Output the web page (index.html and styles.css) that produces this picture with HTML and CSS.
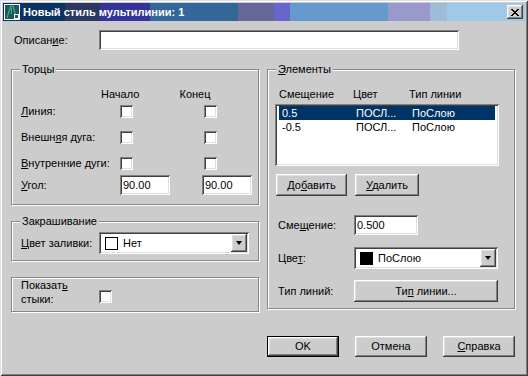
FILE: index.html
```html
<!DOCTYPE html>
<html lang="ru">
<head>
  <meta charset="UTF-8">
  <title>Новый стиль мультилинии</title>
  <link rel="stylesheet" href="styles.css">
</head>
<body>

<div class="window">
  <!-- Заголовок окна -->
  <div class="titlebar">
    <svg class="app-icon" width="16" height="16" viewBox="0 0 16 16">
      <rect x="0.5" y="0.5" width="15" height="15" fill="#1d5663" stroke="#fff"/>
      <path d="M3 14 L6.5 2.5 L9 2.5 L12 12" fill="none" stroke="#3fb07a" stroke-width="1.2"/>
      <path d="M7.5 4 L7.5 10" stroke="#3fb07a" stroke-width="1"/>
      <rect x="10.5" y="10.5" width="4" height="4" fill="#1d5663" stroke="#fff"/>
    </svg>
    <span class="title">Новый стиль мультилинии: 1</span>
    <span class="close-btn">
      <svg width="8" height="7" viewBox="0 0 8 7"><path d="M0 0h2v1h-2zM6 0h2v1h-2zM1 1h2v1h-2zM5 1h2v1h-2zM2 2h4v1h-4zM3 3h2v1h-2zM2 4h4v1h-4zM1 5h2v1h-2zM5 5h2v1h-2zM0 6h2v1h-2zM6 6h2v1h-2z" fill="#000"/></svg>
    </span>
  </div>

  <div class="desc-row">
    <span class="desc-label">Описан<u>и</u>е:</span>
    <div class="field desc-field"></div>
  </div>

  <div class="columns">
    <div class="col-left">
      <div class="group caps">
        <span class="legend">Торцы</span>
        <div class="caps-head"><span>Начало</span><span>Конец</span></div>
        <div class="caps-row first">
          <span class="caps-label"><u>Л</u>иния:</span>
          <span class="cell"><span class="check"></span></span>
          <span class="cell2"><span class="check"></span></span>
        </div>
        <div class="caps-row">
          <span class="caps-label">Внешн<u>я</u>я дуга:</span>
          <span class="cell"><span class="check"></span></span>
          <span class="cell2"><span class="check"></span></span>
        </div>
        <div class="caps-row">
          <span class="caps-label"><u>В</u>нутренние дуги:</span>
          <span class="cell"><span class="check"></span></span>
          <span class="cell2"><span class="check"></span></span>
        </div>
        <div class="caps-row angle">
          <span class="caps-label"><u>У</u>гол:</span>
          <span class="cell"><span class="field angle-field">90.00</span></span>
          <span class="field angle-field">90.00</span>
        </div>
      </div>

      <div class="group fill">
        <span class="legend">Закрашивание</span>
        <div class="fill-row">
          <span class="fill-label"><u>Ц</u>вет заливки:</span>
          <div class="field combo fill-combo">
            <span class="swatch"></span>
            <span class="combo-text">Нет</span>
            <span class="combo-btn"><span class="arrow"></span></span>
          </div>
        </div>
      </div>

      <div class="group joints">
        <span class="joints-label">Показат<u>ь</u><br>стыки:</span>
        <span class="check joints-check"></span>
      </div>
    </div>

    <div class="col-right">
      <div class="group elements">
        <span class="legend"><u>Э</u>лементы</span>
        <div class="el-head"><span>Смещение</span><span>Цвет</span><span>Тип линии</span></div>
        <div class="field list">
          <div class="list-row selected"><span>0.5</span><span>ПОСЛ...</span><span>ПоСлою</span></div>
          <div class="list-row"><span>-0.5</span><span>ПОСЛ...</span><span>ПоСлою</span></div>
        </div>
        <div class="el-buttons">
          <span class="btn btn-add"><span>До<u>б</u>авить</span></span>
          <span class="btn btn-del"><span><u>У</u>далить</span></span>
        </div>
        <div class="el-row offset-row">
          <span class="el-label">Сме<u>щ</u>ение:</span>
          <span class="field offset-field">0.500</span>
        </div>
        <div class="el-row color-row">
          <span class="el-label">Цве<u>т</u>:</span>
          <div class="field combo color-combo">
            <span class="swatch black"></span>
            <span class="combo-text">ПоСлою</span>
            <span class="combo-btn"><span class="arrow"></span></span>
          </div>
        </div>
        <div class="el-row ltype-row">
          <span class="el-label">Тип линий:</span>
          <span class="btn btn-ltype"><span>Ти<u>п</u> линии...</span></span>
        </div>
      </div>
    </div>
  </div>

  <div class="footer">
    <span class="btn btn-ok"><span>OK</span></span>
    <span class="btn"><span>Отмена</span></span>
    <span class="btn"><span><u>С</u>правка</span></span>
  </div>
</div>

</body>
</html>
```

FILE: styles.css
```css
body {
  margin: 0;
  font-family: "Liberation Sans", Arial, sans-serif;
  font-size: 11px;
  line-height: 13px;
  color: #000;
}

u {
  text-decoration: underline;
  text-underline-offset: 1px;
}

.window {
  width: 528px;
  height: 376px;
  box-sizing: border-box;
  background: #cccccc;
  box-shadow: inset 1px 1px #dfdfdf, inset -1px -1px #404040, inset 2px 2px #fff, inset -2px -2px #808080;
  display: flex;
  flex-direction: column;
}

/* Заголовок */
.titlebar {
  margin: 3px 3px 0;
  height: 18px;
  display: flex;
  align-items: center;
  background: linear-gradient(to right,
    #0b3262 0 62px,
    #2a3860 62px 97px,
    #333399 97px 147px,
    #336699 147px 235px,
    #666699 235px 271px,
    #6666cc 271px 287px,
    #6699cc 287px 385px,
    #9999cc 385px 427px,
    #9cbcd8 427px 444px,
    #a0c9e8 444px);
}

.app-icon {
  margin-left: 1px;
  flex-shrink: 0;
}

.title {
  margin-left: 3px;
  color: #fff;
  font-weight: bold;
  font-size: 11px;
}

.close-btn {
  margin-left: auto;
  margin-right: 2px;
  width: 16px;
  height: 14px;
  box-sizing: border-box;
  background: #cccccc;
  box-shadow: inset -1px -1px #404040, inset 1px 1px #fff, inset -2px -2px #808080, inset 2px 2px #dfdfdf;
  display: flex;
  align-items: center;
  justify-content: center;
}

/* Общие элементы */
.field {
  box-sizing: border-box;
  background: #fff;
  box-shadow: inset 1px 1px #808080, inset -1px -1px #fff, inset 2px 2px #404040, inset -2px -2px #dfdfdf;
}

.check {
  display: block;
  width: 13px;
  height: 13px;
  box-sizing: border-box;
  background: #fff;
  box-shadow: inset 1px 1px #808080, inset -1px -1px #fff, inset 2px 2px #404040, inset -2px -2px #dfdfdf;
}

.btn {
  box-sizing: border-box;
  height: 22px;
  background: #cccccc;
  box-shadow: inset -1px -1px #404040, inset 1px 1px #fff, inset -2px -2px #808080, inset 2px 2px #dfdfdf;
  display: flex;
  align-items: center;
  justify-content: center;
}

.group {
  position: relative;
  box-sizing: border-box;
  border: 1px solid #888;
  box-shadow: inset 1px 1px #fff, 1px 1px #fff;
}

.legend {
  position: absolute;
  top: -7px;
  left: 8px;
  padding: 0 2px;
  background: #cccccc;
}

/* Описание */
.desc-row {
  margin-top: 9px;
  padding-left: 14px;
  height: 20px;
  display: flex;
  align-items: center;
}

.desc-label {
  width: 85px;
}

.desc-field {
  width: 360px;
  height: 20px;
}

.columns {
  margin-top: 19px;
  padding-left: 11px;
  display: flex;
  gap: 8px;
}

.col-left {
  width: 248px;
  display: flex;
  flex-direction: column;
}

.col-right {
  width: 248px;
}

/* Торцы */
.caps {
  padding: 17px 0 9px 9px;
}

.caps-head {
  height: 14px;
  padding-left: 80px;
  display: flex;
  align-items: center;
}

.caps-head span {
  width: 80px;
}

.caps-row {
  margin-top: 13px;
  height: 13px;
  display: flex;
  align-items: center;
}

.caps-row.first {
  margin-top: 4px;
}

.caps-row.angle {
  margin-top: 5px;
  height: 20px;
}

.caps-label {
  width: 99px;
}

.cell {
  width: 82px;
}

.cell2 {
  padding-left: 2px;
}

.angle-field {
  display: flex;
  align-items: center;
  width: 50px;
  height: 20px;
  padding-left: 3px;
}

/* Закрашивание */
.fill {
  margin-top: 16px;
  padding: 10px 0 6px 9px;
}

.fill-row {
  display: flex;
  align-items: center;
}

.fill-label {
  width: 78px;
}

.combo {
  display: flex;
  align-items: center;
  height: 22px;
  padding: 2px;
}

.fill-combo {
  width: 150px;
}

.swatch {
  width: 13px;
  height: 13px;
  box-sizing: border-box;
  border: 1px solid #000;
  background: #fff;
  margin-left: 4px;
}

.swatch.black {
  background: #000;
}

.combo-text {
  margin-left: 5px;
}

.combo-btn {
  margin-left: auto;
  width: 16px;
  height: 18px;
  box-sizing: border-box;
  background: #cccccc;
  box-shadow: inset -1px -1px #404040, inset 1px 1px #fff, inset -2px -2px #808080, inset 2px 2px #dfdfdf;
  display: flex;
  align-items: center;
  justify-content: center;
}

.arrow {
  width: 0;
  height: 0;
  border-left: 3.5px solid transparent;
  border-right: 3.5px solid transparent;
  border-top: 4px solid #000;
}

/* Показать стыки */
.joints {
  margin-top: 16px;
  padding: 0 0 5px 9px;
  display: flex;
  line-height: 14px;
}

.joints-label {
  width: 78px;
}

.joints-check {
  margin-top: 12px;
}

/* Элементы */
.elements {
  padding: 17px 0 6px 0;
}

.el-head {
  height: 14px;
  padding-left: 11px;
  display: grid;
  grid-template-columns: 74px 56px auto;
  align-items: center;
}

.list {
  margin: 3px 0 0 7px;
  width: 224px;
  height: 62px;
  padding: 2px 4px;
}

.list-row {
  height: 14px;
  padding-left: 3px;
  display: grid;
  grid-template-columns: 74px 56px auto;
  align-items: center;
}

.list-row.selected {
  background: #003366;
  color: #fff;
}

.el-buttons {
  margin: 8px 0 0 8px;
  display: flex;
  gap: 8px;
}

.btn-add {
  width: 71px;
}

.btn-del {
  width: 64px;
}

.el-row {
  padding-left: 10px;
  display: flex;
  align-items: center;
}

.el-label {
  width: 76px;
}

.offset-row {
  margin-top: 19px;
}

.offset-field {
  width: 64px;
  height: 20px;
  padding-left: 3px;
  display: flex;
  align-items: center;
}

.color-row {
  margin-top: 12px;
}

.color-combo {
  width: 144px;
}

.ltype-row {
  margin-top: 11px;
}

.btn-ltype {
  width: 144px;
}

/* Кнопки внизу */
.footer {
  margin-top: 24px;
  padding-right: 13px;
  display: flex;
  justify-content: flex-end;
  gap: 16px;
}

.footer .btn {
  width: 72px;
  height: 21px;
}

.footer .btn-ok {
  border: 1px solid #000;
}
```
